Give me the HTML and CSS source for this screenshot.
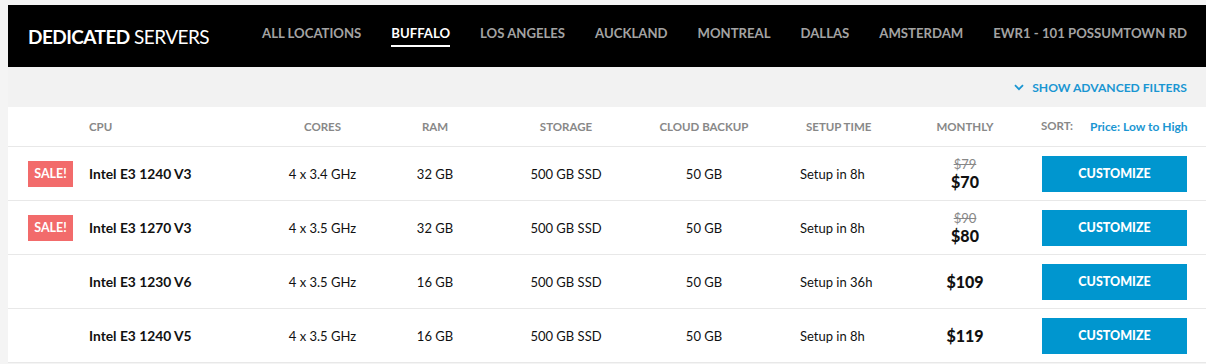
FILE: index.html
```html
<!DOCTYPE html>
<html>
<head>
<meta charset="utf-8">
<link rel="stylesheet" href="styles.css">
</head>
<body>
<div class="page">
  <header class="topbar">
    <div class="brand"><b>DEDICATED</b> SERVERS</div>
    <nav class="nav">
      <a class="nav-item">ALL LOCATIONS</a>
      <a class="nav-item active">BUFFALO</a>
      <a class="nav-item">LOS ANGELES</a>
      <a class="nav-item">AUCKLAND</a>
      <a class="nav-item">MONTREAL</a>
      <a class="nav-item">DALLAS</a>
      <a class="nav-item">AMSTERDAM</a>
      <a class="nav-item">EWR1 - 101 POSSUMTOWN RD</a>
    </nav>
  </header>
  <div class="filterbar">
    <a class="filters-link"><svg class="chev" width="10" height="7" viewBox="0 0 10 7"><path d="M1 1.2 L5 5.2 L9 1.2" fill="none" stroke="#1a96d2" stroke-width="1.8"/></svg>SHOW ADVANCED FILTERS</a>
  </div>
  <div class="table">
    <div class="row head">
      <div class="c-badge"></div>
      <div class="c-cpu">CPU</div>
      <div class="c-mid">CORES</div>
      <div class="c-ram">RAM</div>
      <div class="c-sto">STORAGE</div>
      <div class="c-cloud">CLOUD BACKUP</div>
      <div class="c-setup head-setup">SETUP TIME</div>
      <div class="c-price">MONTHLY</div>
      <div class="c-act sort"><span class="sort-label">SORT:</span><span class="sort-val">Price: Low to High</span></div>
    </div>
    <div class="row">
      <div class="c-badge"><span class="sale">SALE!</span></div>
      <div class="c-cpu name">Intel E3 1240 V3</div>
      <div class="c-mid">4 x 3.4 GHz</div>
      <div class="c-ram">32 GB</div>
      <div class="c-sto">500 GB SSD</div>
      <div class="c-cloud">50 GB</div>
      <div class="c-setup">Setup in 8h</div>
      <div class="c-price"><span class="old">$79</span><span class="now">$70</span></div>
      <div class="c-act"><a class="btn">CUSTOMIZE</a></div>
    </div>
    <div class="row">
      <div class="c-badge"><span class="sale">SALE!</span></div>
      <div class="c-cpu name">Intel E3 1270 V3</div>
      <div class="c-mid">4 x 3.5 GHz</div>
      <div class="c-ram">32 GB</div>
      <div class="c-sto">500 GB SSD</div>
      <div class="c-cloud">50 GB</div>
      <div class="c-setup">Setup in 8h</div>
      <div class="c-price"><span class="old">$90</span><span class="now">$80</span></div>
      <div class="c-act"><a class="btn">CUSTOMIZE</a></div>
    </div>
    <div class="row">
      <div class="c-badge"></div>
      <div class="c-cpu name">Intel E3 1230 V6</div>
      <div class="c-mid">4 x 3.5 GHz</div>
      <div class="c-ram">16 GB</div>
      <div class="c-sto">500 GB SSD</div>
      <div class="c-cloud">50 GB</div>
      <div class="c-setup">Setup in 36h</div>
      <div class="c-price"><span class="now">$109</span></div>
      <div class="c-act"><a class="btn">CUSTOMIZE</a></div>
    </div>
    <div class="row">
      <div class="c-badge"></div>
      <div class="c-cpu name">Intel E3 1240 V5</div>
      <div class="c-mid">4 x 3.5 GHz</div>
      <div class="c-ram">16 GB</div>
      <div class="c-sto">500 GB SSD</div>
      <div class="c-cloud">50 GB</div>
      <div class="c-setup">Setup in 8h</div>
      <div class="c-price"><span class="now">$119</span></div>
      <div class="c-act"><a class="btn">CUSTOMIZE</a></div>
    </div>
  </div>
</div>
</body>
</html>
```

FILE: styles.css
```css
* { box-sizing: border-box; }
html, body { margin: 0; padding: 0; }
body {
  background: #f4f4f4;
  font-family: Lato, "Open Sans", "Liberation Sans", sans-serif;
  color: #111;
}
.page {
  padding: 5px 0 0 8px;
}
.topbar {
  background: #000;
  height: 62px;
  display: flex;
  align-items: center;
  padding-left: 20px;
}
.brand {
  color: #fff;
  font-size: 19px;
  font-weight: 400;
  letter-spacing: -0.55px;
  width: 234px;
  padding-top: 1px;
}
.brand b { font-weight: 700; }
.nav {
  display: flex;
  gap: 30px;
  height: 62px;
  align-items: center;
  padding-bottom: 7px;
}
.nav-item {
  color: #a3a3a3;
  font-weight: 700;
  font-size: 13.15px;
  position: relative;
  line-height: 16px;
}
.nav-item.active { color: #fff; }
.nav-item.active::after {
  content: "";
  position: absolute;
  left: 0; right: 0;
  top: 20px;
  height: 2px;
  background: #fff;
}
.filterbar {
  height: 40px;
  background: #f2f2f2;
  display: flex;
  align-items: center;
  justify-content: flex-end;
  padding-right: 19px;
}
.filters-link {
  color: #1a96d2;
  font-weight: 700;
  font-size: 12.1px;
  display: flex;
  align-items: center;
  gap: 8px;
}
.table { background: #fff; }
.row {
  display: grid;
  grid-template-columns: 81px 181px 105px 120px 142px 134px 134px 120px 181px;
  align-items: center;
  height: 54px;
  border-bottom: 1px solid #e8e8e8;
  font-size: 13px;
  color: #111;
}
.row.head {
  height: 40px;
  color: #888;
  font-weight: 700;
  font-size: 11.5px;
}
.c-badge { padding-left: 20px; }
.c-mid, .c-ram, .c-sto, .c-cloud, .c-price { text-align: center; }
.c-setup { padding-left: 29px; }
.head-setup { padding-left: 35px; }
.c-act { padding-left: 17px; }
.sale {
  display: inline-flex;
  align-items: center;
  justify-content: center;
  width: 45px;
  height: 26px;
  background: #f26b6b;
  color: #fff;
  font-weight: 700;
  font-size: 12.5px;
}
.name { font-weight: 700; font-size: 13.8px; }
.c-price { display: flex; flex-direction: column; align-items: center; }
.old {
  color: #888;
  text-decoration: line-through;
  font-size: 13px;
  line-height: 15px;
}
.now {
  font-weight: 900;
  font-size: 16px;
  line-height: 19px;
}
.btn {
  display: flex;
  align-items: center;
  justify-content: center;
  width: 145px;
  height: 36px;
  background: #0096cf;
  color: #fff;
  font-weight: 900;
  font-size: 12.5px;
}
.sort { display: flex; gap: 17px; padding-left: 16px; }
.sort-val { color: #1a96d2; font-size: 12px; }
```
